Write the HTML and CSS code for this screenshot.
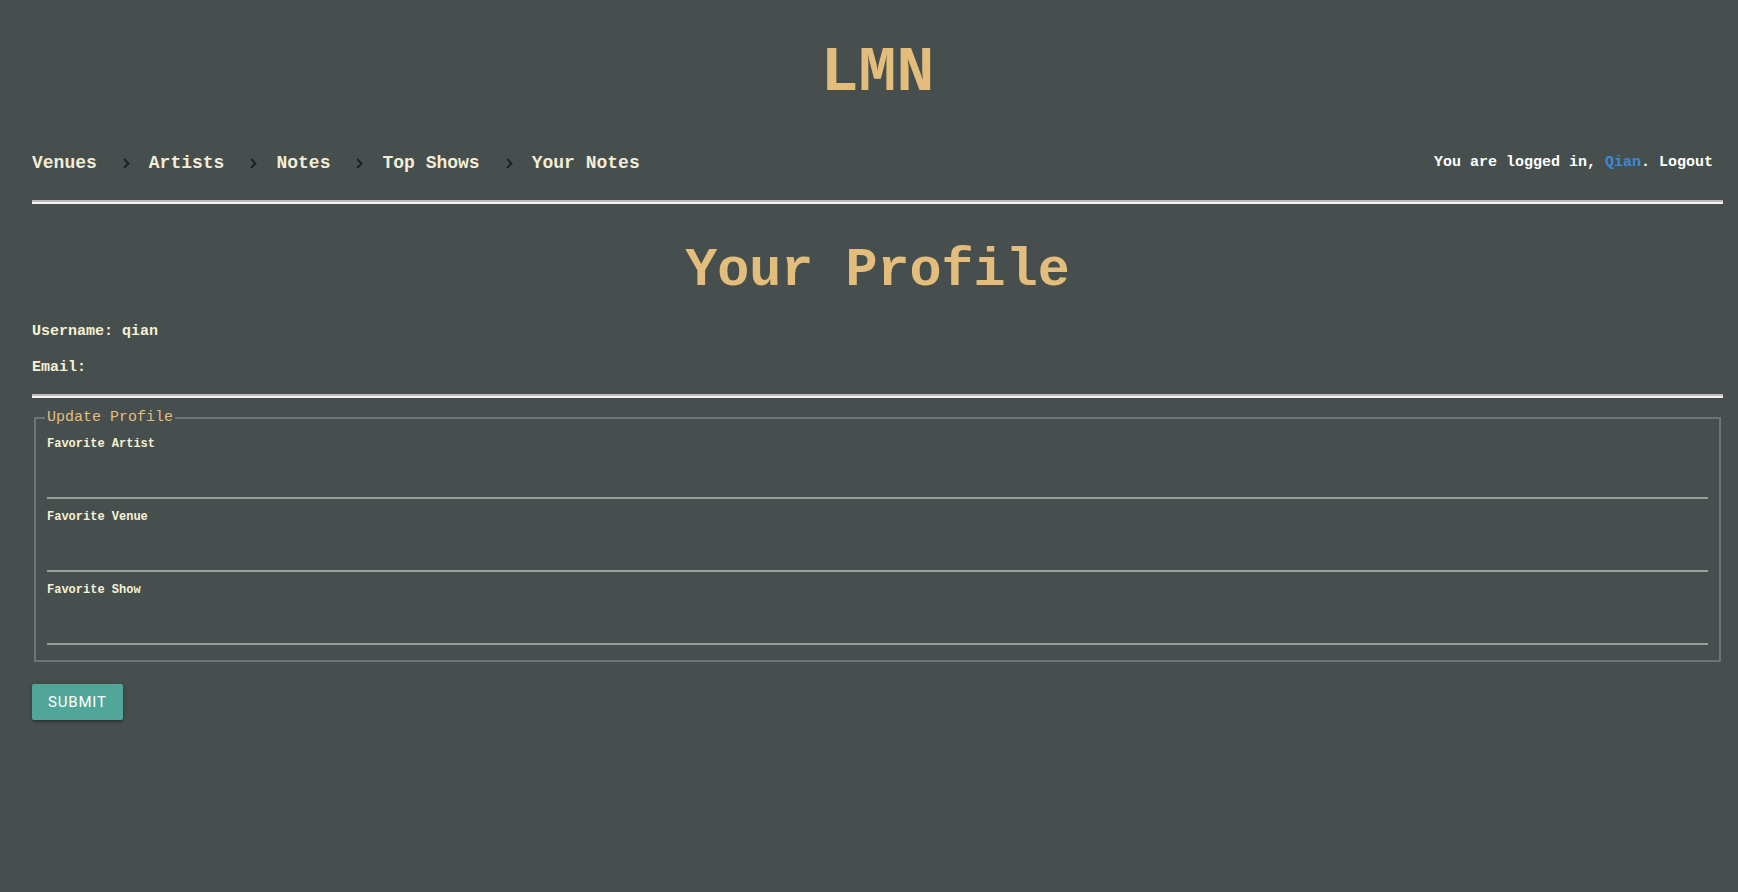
FILE: index.html
```html
<!DOCTYPE html>
<html lang="en">
<head>
<meta charset="utf-8">
<title>LMN - Your Profile</title>
<link rel="stylesheet" href="styles.css">
</head>
<body>
<div class="page">
  <header class="site-header">
    <h1 class="brand">LMN</h1>
    <nav class="nav">
      <div class="crumbs">
        <a class="crumb" href="#">Venues</a>
        <span class="chev"><svg width="7" height="11" viewBox="0 0 7 11"><path d="M1 1 L5.5 5.5 L1 10" fill="none" stroke="#1c1f1f" stroke-width="1.8"/></svg></span>
        <a class="crumb" href="#">Artists</a>
        <span class="chev"><svg width="7" height="11" viewBox="0 0 7 11"><path d="M1 1 L5.5 5.5 L1 10" fill="none" stroke="#1c1f1f" stroke-width="1.8"/></svg></span>
        <a class="crumb" href="#">Notes</a>
        <span class="chev"><svg width="7" height="11" viewBox="0 0 7 11"><path d="M1 1 L5.5 5.5 L1 10" fill="none" stroke="#1c1f1f" stroke-width="1.8"/></svg></span>
        <a class="crumb" href="#">Top Shows</a>
        <span class="chev"><svg width="7" height="11" viewBox="0 0 7 11"><path d="M1 1 L5.5 5.5 L1 10" fill="none" stroke="#1c1f1f" stroke-width="1.8"/></svg></span>
        <a class="crumb" href="#">Your Notes</a>
      </div>
      <div class="login">You are logged in, <a class="user" href="#">Qian</a>. <a class="logout" href="#">Logout</a></div>
    </nav>
  </header>
  <hr class="rule rule-top">
  <main>
    <h2 class="title">Your Profile</h2>
    <p class="info info-first">Username: qian</p>
    <p class="info">Email: </p>
    <hr class="rule rule-mid">
    <form class="profile-form">
      <fieldset class="box">
        <legend class="box-legend">Update Profile</legend>
        <label class="field-label" for="fa">Favorite Artist</label>
        <input class="field-input" id="fa" type="text">
        <label class="field-label" for="fv">Favorite Venue</label>
        <input class="field-input" id="fv" type="text">
        <label class="field-label" for="fs">Favorite Show</label>
        <input class="field-input" id="fs" type="text">
      </fieldset>
      <button class="btn" type="button">Submit</button>
    </form>
  </main>
</div>
</body>
</html>
```
FILE: styles.css
```css
html, body {
  margin: 0;
  padding: 0;
  background: #464f4e;
}

body {
  font-family: "Liberation Mono", "Courier New", monospace;
  color: #f4efd6;
}

.page {
  padding: 0 15px 40px 32px;
}

.site-header {
  display: flex;
  flex-direction: column;
  padding-top: 34px;
}

.brand {
  margin: 0;
  text-align: center;
  font-size: 63px;
  line-height: 80px;
  font-weight: bold;
  color: #e3bd7c;
}

.nav {
  display: flex;
  justify-content: space-between;
  align-items: center;
  margin-top: 37px;
  height: 24px;
}

.crumbs {
  display: flex;
  align-items: center;
}

.crumb {
  font-size: 18px;
  line-height: 24px;
  font-weight: bold;
  color: #f3ecd6;
  text-decoration: none;
}

.chev {
  display: flex;
  margin: 0 19px 0 26px;
}

.login {
  font-size: 15px;
  line-height: 24px;
  font-weight: bold;
  color: #ffffff;
  margin-right: 10px;
}

.user {
  color: #3c8ad8;
  text-decoration: none;
}

.logout {
  color: #ffffff;
  text-decoration: none;
}

.rule {
  margin: 0;
  height: 0;
  border: 0;
  border-top: 2px solid #bcbcbc;
  border-bottom: 2px solid #f4f4f4;
}

.rule-top {
  margin-top: 25px;
}

.title {
  margin: 35px 0 0;
  text-align: center;
  font-size: 53.4px;
  line-height: 64px;
  font-weight: bold;
  color: #e3bd7c;
}

.info {
  margin: 16px 0 0;
  font-size: 15px;
  line-height: 20px;
  font-weight: bold;
  color: #f6f1d4;
}

.info-first {
  margin-top: 19px;
}

.rule-mid {
  margin-top: 16px;
}

.profile-form {
  display: flex;
  flex-direction: column;
  align-items: flex-start;
}

.box {
  align-self: stretch;
  display: flex;
  flex-direction: column;
  margin: 10px 2px 0;
  padding: 9px 9px 4px;
  border: 2px solid #6f7373;
  font-size: 12px;
}

.box-legend {
  padding: 0 2px;
  font-size: 15px;
  line-height: 20px;
  color: #e3bd7c;
}

.field-label {
  margin: 0 2px;
  font-size: 12px;
  line-height: 14px;
  font-weight: bold;
  color: #f6f1d4;
}

.field-input {
  display: block;
  box-sizing: border-box;
  height: 48px;
  margin: 0 2px 11px;
  padding: 0;
  border: 0;
  border-bottom: 2px solid #9c9e9e;
  background: transparent;
  color: #ffffff;
  font-family: inherit;
  font-size: 15px;
  outline: none;
}

.btn {
  margin-top: 22px;
  height: 36px;
  padding: 0 16px;
  border: 0;
  border-radius: 2px;
  background: #50a699;
  color: #ffffff;
  font-family: Roboto, "Liberation Sans", sans-serif;
  font-size: 15px;
  letter-spacing: 0.8px;
  text-transform: uppercase;
  box-shadow: 0 2px 2px 0 rgba(0,0,0,0.14), 0 3px 1px -2px rgba(0,0,0,0.12), 0 1px 5px 0 rgba(0,0,0,0.2);
  cursor: pointer;
}
```
